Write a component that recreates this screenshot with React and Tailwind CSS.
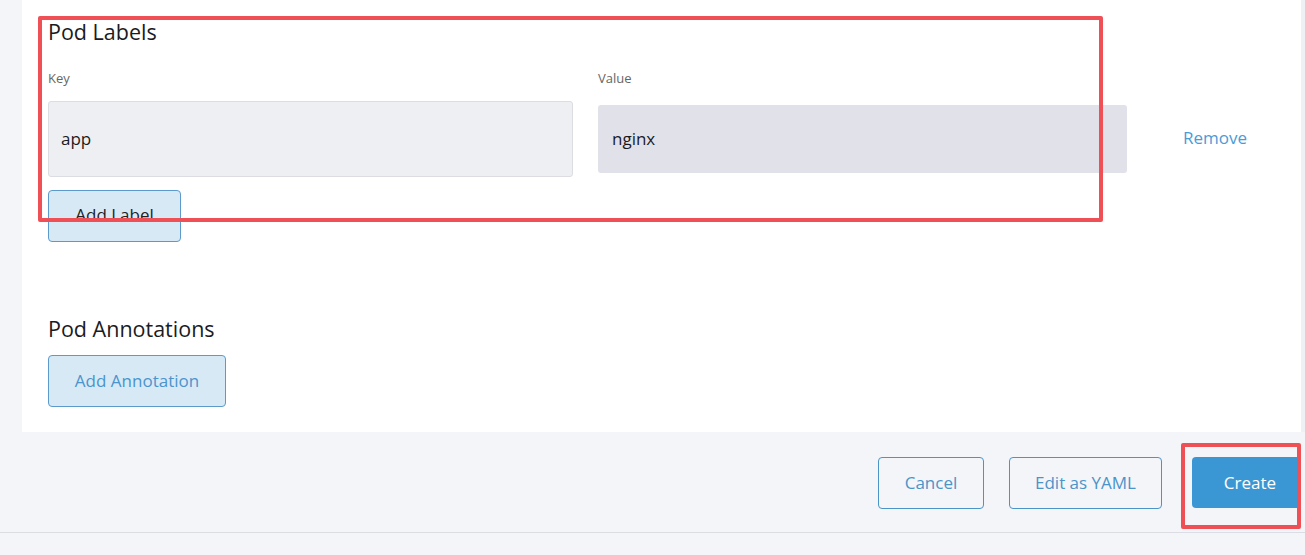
export default function App() {
  const font = { fontFamily: '"Open Sans", "Noto Sans", sans-serif' };
  return (
    <div className="relative w-[1305px] h-[555px] overflow-hidden bg-[#f4f5f9] text-[#1b1b1f]" style={font}>
      <div className="flex h-[432px]">
        <div className="w-[22px] bg-[#f4f5f9]" />
        <div className="w-[1279px] bg-white pl-[26px] pt-[18px]">
          <h2 className="text-[21.5px] leading-[28px] font-normal">Pod Labels</h2>
          <div className="mt-[24px] flex items-start">
            <div className="w-[525px]">
              <div className="text-[13px] leading-[16px] text-[#666]">Key</div>
              <div className="mt-[15px] h-[76px] rounded-[3px] border border-[#dcdde2] bg-[#eeeff2] flex items-center px-[12px] text-[17px]">app</div>
            </div>
            <div className="ml-[25px] w-[529px]">
              <div className="text-[13px] leading-[16px] text-[#666]">Value</div>
              <div className="mt-[19px] h-[68px] rounded-[3px] bg-[#e0e1e9] flex items-center px-[14px] text-[17px]">nginx</div>
            </div>
            <div className="ml-[56px] mt-[55px] text-[17px] text-[#4b9bd6]">Remove</div>
          </div>
          <button className="mt-[13px] h-[52px] w-[133px] rounded-[4px] border border-[#5b9acb] bg-[#d8e9f6] pb-[3px] text-[17px] text-[#222]">Add Label</button>
          <h2 className="mt-[73px] text-[21.5px] leading-[28px] font-normal">Pod Annotations</h2>
          <button className="mt-[12px] h-[52px] w-[178px] rounded-[4px] border border-[#5b9acb] bg-[#d8e9f6] text-[17px] text-[#4b94cc]">Add Annotation</button>
        </div>
        <div className="flex-1 bg-[#eef0f4]" />
      </div>
      <div className="flex h-[101px] items-center justify-end border-b border-[#dcdde3] pt-[1px]">
        <button className="h-[52px] w-[106px] shrink-0 rounded-[4px] border border-[#4a94c8] text-[17px] text-[#4a94c8]">Cancel</button>
        <button className="ml-[25px] h-[52px] w-[153px] shrink-0 rounded-[4px] border border-[#4a94c8] text-[17px] text-[#4a94c8]">Edit as YAML</button>
        <button className="ml-[30px] mr-[7px] h-[51px] w-[106px] shrink-0 rounded-l-[4px] bg-[#3b97d3] pl-[10px] text-[17px] text-white">Create</button>
      </div>
      <div className="pointer-events-none absolute left-[38px] top-[16px] h-[206px] w-[1065px] rounded-[2px] border-[4px] border-[#ef5055]" />
      <div className="pointer-events-none absolute left-[1181px] top-[443px] h-[86px] w-[120px] rounded-[2px] border-[4px] border-[#ef5055]" />
    </div>
  );
}
